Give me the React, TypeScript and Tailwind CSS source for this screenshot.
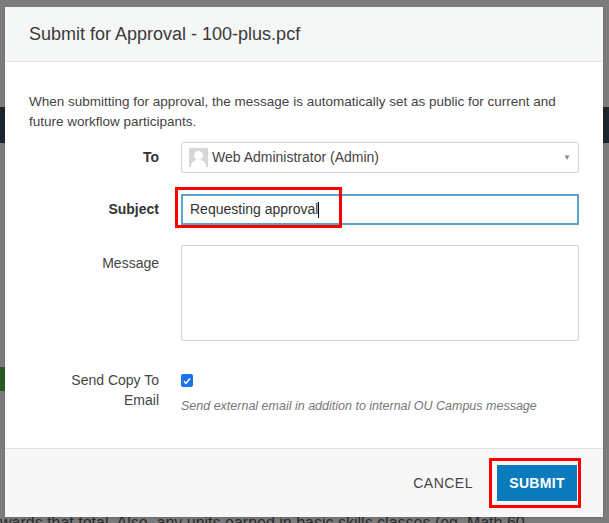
import React from "react";

export default function App() {
  return (
    <div className="relative w-[609px] h-[523px] overflow-hidden bg-[#7c7c7c] text-[#333]" style={{ fontFamily: "'Liberation Sans', Arial, sans-serif" }}>
      {/* dimmed page behind */}
      <div className="absolute left-0 top-[107px] w-full h-[36px] bg-[#1d2530]" />
      <div className="absolute left-0 top-[367px] w-[6px] h-[24px] bg-[#2a5a22]" />
      <div className="absolute left-0 top-[514px] text-[16px] leading-[18px] text-[#2a2a2a] whitespace-nowrap">wards that total. Also, any units earned in basic skills classes (eg. Math 60, ...</div>

      <div className="absolute left-[5px] top-[7px] w-[598px] h-[510px] bg-white flex flex-col shadow">
        <div className="h-[55px] bg-[#f5f6f6] border-b border-[#dfe1e1] flex items-center px-6">
          <h1 className="text-[18px] text-[#3a3a3a]">Submit for Approval - 100-plus.pcf</h1>
        </div>
        <div className="flex-1 px-6 pt-[30px] text-[14px]">
          <p className="leading-[20px] text-[13.5px] text-[#444]">When submitting for approval, the message is automatically set as public for current and future workflow participants.</p>
          <div className="mt-[10px] flex items-center">
            <label className="w-[130px] text-right font-bold text-[#333]">To</label>
            <div className="ml-[22px] w-[398px] h-[31px] border border-[#d4d4d4] rounded-[2px] flex items-center px-[7px]">
              <div className="w-[19px] h-[19px] bg-[#d7d7d7] relative overflow-hidden">
                <div className="absolute left-[5px] top-[3px] w-[9px] h-[9px] rounded-full bg-white" />
                <div className="absolute left-[2px] top-[12px] w-[15px] h-[12px] rounded-full bg-white" />
              </div>
              <span className="ml-[4px] text-[14px] text-[#444]">Web Administrator (Admin)</span>
              <span className="ml-auto text-[8px] text-[#888]">▼</span>
            </div>
          </div>
          <div className="mt-[21px] flex items-center">
            <label className="w-[130px] text-right font-bold text-[#333]">Subject</label>
            <div className="ml-[22px] w-[398px] h-[31px] border-2 border-[#5aa3cc] flex items-center px-[7px] relative">
              <span className="text-[14px] text-[#333]">Requesting approval</span>
              <span className="w-px h-[16px] bg-black" />
              <div className="absolute left-[-8px] top-[-9px] w-[167px] h-[41px] border-[3px] border-[#ff0000]" />
            </div>
          </div>
          <div className="mt-[20px] flex items-start">
            <label className="w-[130px] text-right text-[#444] pt-[8px]">Message</label>
            <div className="ml-[22px] w-[398px] h-[96px] border border-[#d4d4d4] rounded-[2px]" />
          </div>
          <div className="mt-[29px] flex items-start">
            <label className="w-[130px] text-right text-[#444] leading-[20px]">Send Copy To<br />Email</label>
            <div className="ml-[22px]">
              <div className="w-[12px] h-[13px] mt-[4px] rounded-[2px] bg-[#1a73e8] flex items-center justify-center">
                <svg width="10" height="10" viewBox="0 0 10 10"><path d="M2 5.2l2 2L8 2.5" stroke="white" strokeWidth="1.6" fill="none" /></svg>
              </div>
              <p className="mt-[10px] text-[12.5px] italic text-[#777]">Send external email in addition to internal OU Campus message</p>
            </div>
          </div>
        </div>
        <div className="h-[69px] bg-[#f7f7f7] border-t border-[#dfe1e1] flex items-center justify-end pr-[26px]">
          <span className="text-[14px] text-[#444] tracking-[0.5px] mr-[24px]">CANCEL</span>
          <div className="relative">
            <div className="absolute left-[-8px] top-[-7px] w-[92px] h-[50px] border-[3px] border-[#ff0000]" />
            <button className="relative w-[80px] h-[36px] bg-[#0c7bbd] text-white text-[14px] font-bold tracking-[0.3px]">SUBMIT</button>
          </div>
        </div>
      </div>
    </div>
  );
}
